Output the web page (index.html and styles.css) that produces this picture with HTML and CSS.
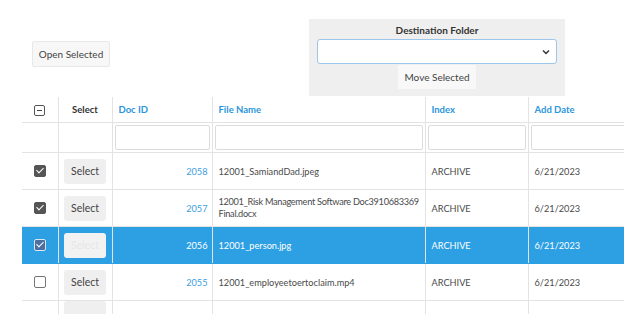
FILE: index.html
```html
<!DOCTYPE html>
<html>
<head>
<meta charset="utf-8">
<link rel="stylesheet" href="styles.css">
</head>
<body>
<div class="page">
  <div class="toolbar">
    <button class="btn open-btn">Open Selected</button>
    <div class="dest">
      <div class="dest-title">Destination Folder</div>
      <div class="dest-select">
        <svg class="chev" width="8" height="6" viewBox="0 0 8 6"><path d="M1 1.5 L4 4.5 L7 1.5" fill="none" stroke="#333" stroke-width="1.5"/></svg>
      </div>
      <button class="btn move-btn">Move Selected</button>
    </div>
  </div>
  <table class="grid">
    <colgroup>
      <col class="c-chk"><col class="c-sel"><col class="c-id"><col class="c-name"><col class="c-idx"><col class="c-date">
    </colgroup>
    <thead>
      <tr class="head">
        <th class="center"><span class="minus"></span></th>
        <th class="center dark">Select</th>
        <th>Doc ID</th>
        <th>File Name</th>
        <th>Index</th>
        <th>Add Date</th>
      </tr>
      <tr class="filter">
        <td></td><td></td>
        <td><div class="finput"></div></td>
        <td><div class="finput"></div></td>
        <td><div class="finput"></div></td>
        <td><div class="finput"></div></td>
      </tr>
    </thead>
    <tbody>
      <tr>
        <td class="center"><span class="cb checked"></span></td>
        <td class="center"><span class="selbtn">Select</span></td>
        <td class="id">2058</td>
        <td>12001_SamiandDad.jpeg</td>
        <td>ARCHIVE</td>
        <td>6/21/2023</td>
      </tr>
      <tr>
        <td class="center"><span class="cb checked"></span></td>
        <td class="center"><span class="selbtn">Select</span></td>
        <td class="id">2057</td>
        <td class="wrap">12001_Risk Management Software Doc3910683369<br>Final.docx</td>
        <td>ARCHIVE</td>
        <td>6/21/2023</td>
      </tr>
      <tr class="active">
        <td class="center"><span class="cb checked"></span></td>
        <td class="center"><span class="selbtn">Select</span></td>
        <td class="id">2056</td>
        <td>12001_person.jpg</td>
        <td>ARCHIVE</td>
        <td>6/21/2023</td>
      </tr>
      <tr>
        <td class="center"><span class="cb"></span></td>
        <td class="center"><span class="selbtn">Select</span></td>
        <td class="id">2055</td>
        <td>12001_employeetoertoclaim.mp4</td>
        <td>ARCHIVE</td>
        <td>6/21/2023</td>
      </tr>
      <tr class="partial">
        <td class="center"></td>
        <td class="center"><span class="selbtn blank"></span></td>
        <td class="id"></td>
        <td></td>
        <td></td>
        <td></td>
      </tr>
    </tbody>
  </table>
</div>
</body>
</html>
```
FILE: styles.css
```css
html, body {
  margin: 0;
  padding: 0;
  background: #fff;
  overflow: hidden;
}
body {
  font-family: "Lato", "Open Sans", sans-serif;
  font-size: 9.2px;
  color: #4a4a4a;
}
.page {
  width: 624px;
  height: 314px;
  overflow: hidden;
}
.toolbar {
  display: flex;
  align-items: flex-start;
  height: 97px;
}
.btn {
  font-family: inherit;
  font-size: 10px;
  color: #444;
  background: #f7f7f7;
  border: 1px solid #e8e8e8;
  border-radius: 2px;
  padding: 0;
  cursor: pointer;
}
.open-btn {
  margin: 41px 0 0 32px;
  width: 78px;
  height: 26px;
}
.dest {
  margin: 19px 0 0 199px;
  width: 256px;
  height: 77px;
  background: #efefef;
  display: flex;
  flex-direction: column;
  align-items: center;
}
.dest-title {
  font-weight: 700;
  color: #333;
  font-size: 10px;
  margin-top: 4px;
  line-height: 14px;
}
.dest-select {
  margin-top: 2px;
  background: #fff;
  border: 1px solid #9cc6ea;
  border-radius: 3px;
  display: flex;
  align-items: center;
  justify-content: flex-end;
  padding-right: 6px;
  box-sizing: border-box;
  width: 240px;
  height: 25px;
}
.move-btn {
  width: 78px;
  height: 24px;
  margin-top: 1px;
  background: #f8f8f8;
  border: none;
  border-radius: 0;
}
.grid {
  margin-left: 22px;
  border-collapse: collapse;
  table-layout: fixed;
  width: 640px;
}
.c-chk { width: 36px; }
.c-sel { width: 54px; }
.c-id { width: 100px; }
.c-name { width: 213px; }
.c-idx { width: 103px; }
.c-date { width: 134px; }
.grid th, .grid td {
  border-left: 1px solid #e3e3e3;
  border-bottom: 1px solid #e3e3e3;
  padding: 0 6px;
  text-align: left;
  vertical-align: middle;
  white-space: nowrap;
  overflow: hidden;
}
.grid tr > :first-child {
  border-left: none;
}
.head th {
  height: 25px;
  color: #2a96dc;
  font-weight: 700;
  font-size: 9.5px;
}
.head th.dark { color: #333; }
.center { text-align: center !important; padding: 0 !important; }
.minus {
  display: inline-block;
  width: 9px;
  height: 9px;
  border: 1px solid #555;
  border-radius: 2px;
  position: relative;
  vertical-align: middle;
}
.minus::after {
  content: "";
  position: absolute;
  left: 2px;
  right: 2px;
  top: 4px;
  height: 1px;
  background: #444;
}
.filter td {
  height: 29px;
  padding: 0 2px;
}
.finput {
  height: 25px;
  border: 1px solid #dcdcdc;
  border-radius: 2px;
  background: #fff;
  box-sizing: border-box;
}
tbody td {
  height: 36px;
}
.partial td {
  height: 20px;
  vertical-align: top;
  padding-top: 6px;
  border-bottom: none;
}
.id {
  text-align: right !important;
  color: #3c9ee0;
  padding-right: 4px !important;
}
.grid td.wrap {
  line-height: 12px;
  letter-spacing: -0.3px;
  padding-right: 2px;
}
.cb {
  display: inline-block;
  width: 10px;
  height: 10px;
  border: 1px solid #777;
  border-radius: 2px;
  background: #fff;
  vertical-align: middle;
  position: relative;
}
.cb.checked {
  background: #555;
  border-color: #555;
}
.cb.checked::after {
  content: "";
  position: absolute;
  left: 3px;
  top: 0px;
  width: 3px;
  height: 6px;
  border: solid #fff;
  border-width: 0 1.5px 1.5px 0;
  transform: rotate(45deg);
}
.selbtn {
  display: inline-block;
  width: 42px;
  height: 25px;
  line-height: 25px;
  background: #efefef;
  border-radius: 3px;
  font-size: 10.5px;
  color: #444;
  vertical-align: middle;
}
.partial .selbtn { vertical-align: top; }
.active td {
  background: #2d9fe3;
  color: #fff;
  border-bottom-color: #2d9fe3;
}
.active td.id { color: #fff; }
.active .selbtn {
  background: #f2f2f2;
  color: #e6e6e6;
}
.active .cb.checked { background: #4a6fa0; border-color: #dbe6f2; }
```
